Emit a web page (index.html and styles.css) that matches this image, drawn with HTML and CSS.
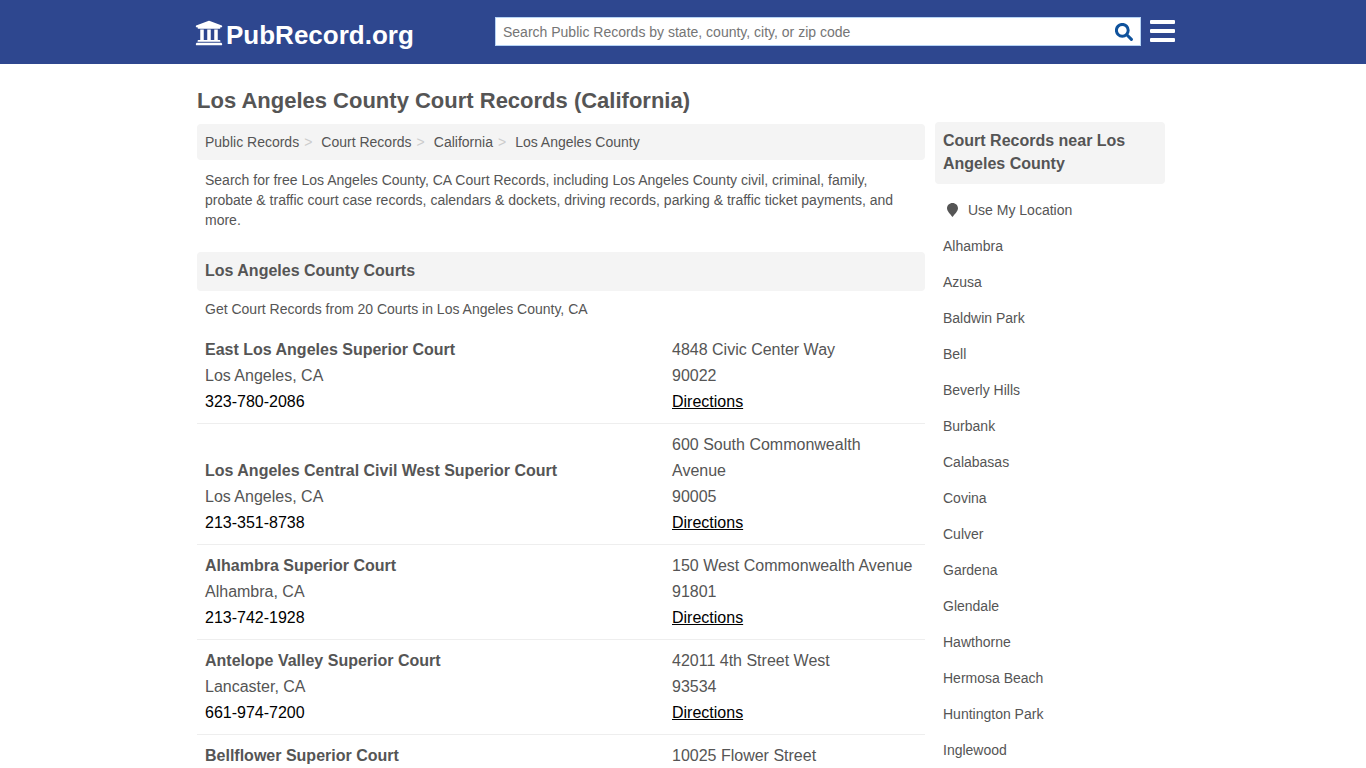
FILE: index.html
```
<!DOCTYPE html>
<html lang="en">

<head>
    <meta charset="UTF-8">
    <meta name="viewport" content="width=device-width, initial-scale=1.0">
    <title>Los Angeles County Court Records (California)</title>
    <link rel="stylesheet" href="styles.css">
</head>

<body>
    <header class="header">
        <div class="header-inner">
            <a class="logo" href="#">
                <svg class="logo-icon" viewBox="0 0 512 512" aria-hidden="true">
                    <path d="M496 128v16a8 8 0 0 1-8 8h-24v12c0 6.627-5.373 12-12 12H60c-6.627 0-12-5.373-12-12v-12H24a8 8 0 0 1-8-8v-16a8 8 0 0 1 4.941-7.392l232-88a7.996 7.996 0 0 1 6.118 0l232 88A8 8 0 0 1 496 128zm-24 304H40c-13.255 0-24 10.745-24 24v16a8 8 0 0 0 8 8h464a8 8 0 0 0 8-8v-16c0-13.255-10.745-24-24-24zM96 192v192H60c-6.627 0-12 5.373-12 12v20h416v-20c0-6.627-5.373-12-12-12h-36V192h-64v192h-64V192h-64v192h-64V192H96z"/>
                </svg>
                <span>PubRecord.org</span>
            </a>
            <form class="search" role="search">
                <input class="search-input" type="text" aria-label="Search Public Records" placeholder="Search Public Records by state, county, city, or zip code">
                <button class="search-button" type="submit" aria-label="Search">
                    <svg viewBox="0 0 18 18" aria-hidden="true">
                        <circle cx="7.3" cy="7.3" r="5.9"/>
                        <path d="M11.8 11.8L16.4 16.4"/>
                    </svg>
                </button>
            </form>
            <button class="menu-button" type="button" aria-label="Menu">
                <span></span>
                <span></span>
                <span></span>
            </button>
        </div>
    </header>

    <div class="container">
        <main class="content">
            <h1>Los Angeles County Court Records (California)</h1>
            <nav class="breadcrumb" aria-label="Breadcrumb">
                <ol>
                    <li><a href="#">Public Records</a></li>
                    <li><a href="#">Court Records</a></li>
                    <li><a href="#">California</a></li>
                    <li><a href="#">Los Angeles County</a></li>
                </ol>
            </nav>
            <p class="intro">Search for free Los Angeles County, CA Court Records, including Los Angeles County civil, criminal, family, probate &amp; traffic court case records, calendars &amp; dockets, driving records, parking &amp; traffic ticket payments, and more.</p>

            <h2 class="section-title">Los Angeles County Courts</h2>
            <p class="summary">Get Court Records from 20 Courts in Los Angeles County, CA</p>
            <table class="courts">
                <tbody>
                    <tr>
                        <td><a class="court-name" href="#">East Los Angeles Superior Court</a><br>Los Angeles, CA<br><a class="phone" href="tel:323-780-2086">323-780-2086</a></td>
                        <td class="address">4848 Civic Center Way<br>90022<br><a class="directions" href="#">Directions</a></td>
                    </tr>
                    <tr>
                        <td><a class="court-name" href="#">Los Angeles Central Civil West Superior Court</a><br>Los Angeles, CA<br><a class="phone" href="tel:213-351-8738">213-351-8738</a></td>
                        <td class="address">600 South Commonwealth Avenue<br>90005<br><a class="directions" href="#">Directions</a></td>
                    </tr>
                    <tr>
                        <td><a class="court-name" href="#">Alhambra Superior Court</a><br>Alhambra, CA<br><a class="phone" href="tel:213-742-1928">213-742-1928</a></td>
                        <td class="address">150 West Commonwealth Avenue<br>91801<br><a class="directions" href="#">Directions</a></td>
                    </tr>
                    <tr>
                        <td><a class="court-name" href="#">Antelope Valley Superior Court</a><br>Lancaster, CA<br><a class="phone" href="tel:661-974-7200">661-974-7200</a></td>
                        <td class="address">42011 4th Street West<br>93534<br><a class="directions" href="#">Directions</a></td>
                    </tr>
                    <tr>
                        <td><a class="court-name" href="#">Bellflower Superior Court</a></td>
                        <td class="address">10025 Flower Street</td>
                    </tr>
                </tbody>
            </table>
        </main>

        <aside class="sidebar">
            <h2 class="section-title">Court Records near Los Angeles County</h2>
            <ul class="nearby">
                <li>
                    <a class="use-location" href="#">
                        <svg viewBox="0 0 11 14" aria-hidden="true">
                            <path d="M5.5 0C8.6 0 11 2.4 11 5.3C11 8.3 7.6 11.2 5.5 14C3.4 11.2 0 8.3 0 5.3C0 2.4 2.4 0 5.5 0Z"/>
                        </svg>
                        Use My Location
                    </a>
                </li>
                <li><a href="#">Alhambra</a></li>
                <li><a href="#">Azusa</a></li>
                <li><a href="#">Baldwin Park</a></li>
                <li><a href="#">Bell</a></li>
                <li><a href="#">Beverly Hills</a></li>
                <li><a href="#">Burbank</a></li>
                <li><a href="#">Calabasas</a></li>
                <li><a href="#">Covina</a></li>
                <li><a href="#">Culver</a></li>
                <li><a href="#">Gardena</a></li>
                <li><a href="#">Glendale</a></li>
                <li><a href="#">Hawthorne</a></li>
                <li><a href="#">Hermosa Beach</a></li>
                <li><a href="#">Huntington Park</a></li>
                <li><a href="#">Inglewood</a></li>
            </ul>
        </aside>
    </div>
</body>

</html>
```
FILE: styles.css
```
* {
    box-sizing: border-box;
}

body {
    margin: 0;
    background: #fff;
    color: #555;
    font-family: Arial, "Liberation Sans", sans-serif;
    font-size: 14px;
    line-height: 20px;
}

a {
    color: inherit;
    text-decoration: none;
}

button {
    padding: 0;
    border: 0;
    background: none;
    cursor: pointer;
}

/* Header */
.header {
    background: #2e478f;
}

.header-inner {
    display: flex;
    align-items: flex-start;
    max-width: 984px;
    height: 64px;
    margin: 0 auto;
    padding-left: 4px;
}

.logo {
    display: flex;
    align-items: center;
    gap: 3px;
    width: 300px;
    padding-top: 19px;
    color: #fff;
    font-size: 26px;
    font-weight: bold;
    line-height: 30px;
}

.logo-icon {
    width: 28px;
    height: 28px;
    margin-bottom: 4px;
    fill: #fff;
}

.search {
    display: flex;
    flex: 1;
    height: 29px;
    margin: 17px 9px 0 0;
    border: 1px solid #b5d3f5;
    background: #fff;
}

.search-input {
    flex: 1;
    min-width: 0;
    padding: 0 7px;
    border: 0;
    outline: none;
    background: none;
    color: #555;
    font: inherit;
}

.search-input::placeholder {
    color: #757575;
}

.search-button {
    width: 32px;
}

.search-button svg {
    display: block;
    width: 18px;
    height: 18px;
    margin: 0 auto;
    fill: none;
    stroke: #0f529c;
    stroke-width: 3;
    stroke-linecap: round;
}

.menu-button {
    display: flex;
    flex-direction: column;
    gap: 5px;
    width: 25px;
    margin-top: 20px;
}

.menu-button span {
    width: 100%;
    height: 4px;
    border-radius: 1px;
    background: #fff;
}

/* Layout */
.container {
    display: flex;
    align-items: flex-start;
    gap: 10px;
    max-width: 984px;
    margin: 0 auto;
    padding: 0 10px 0 6px;
}

.content {
    flex: 1;
    min-width: 0;
}

.sidebar {
    flex: 0 0 230px;
    margin-top: 58px;
}

h1 {
    margin: 25px 0 11px;
    font-size: 22px;
    line-height: 24px;
}

.section-title {
    margin: 0;
    padding: 7px 8px 9px;
    border-radius: 4px;
    background: #f4f4f4;
    font-size: 16px;
    line-height: 23px;
}

.breadcrumb {
    padding: 8px;
    border-radius: 4px;
    background: #f4f4f4;
}

.breadcrumb ol {
    display: flex;
    margin: 0;
    padding: 0;
    list-style: none;
}

.breadcrumb li + li::before {
    content: ">";
    padding: 0 9px 0 5px;
    color: #ccc;
}

.intro {
    margin: 10px 0 22px;
    padding: 0 8px;
}

.summary {
    margin: 8px 0 10px;
    padding: 0 8px;
}

/* Court list */
.courts {
    width: 100%;
    border-collapse: separate;
    border-spacing: 0;
    font-size: 16px;
    line-height: 26px;
}

.courts td {
    padding: 8px;
    border-bottom: 1px solid #eee;
    vertical-align: bottom;
}

.courts .address {
    width: 261px;
    padding-right: 10px;
}

.court-name {
    font-weight: bold;
}

.phone,
.directions {
    color: #000;
}

.directions {
    text-decoration: underline;
}

/* Nearby places */
.nearby {
    margin: 8px 0 0;
    padding: 0;
    list-style: none;
}

.nearby a {
    display: block;
    padding: 8px;
}

.nearby .use-location {
    display: flex;
    align-items: center;
    gap: 10px;
    padding-left: 12px;
}

.use-location svg {
    width: 11px;
    height: 14px;
    fill: #555;
}
```
